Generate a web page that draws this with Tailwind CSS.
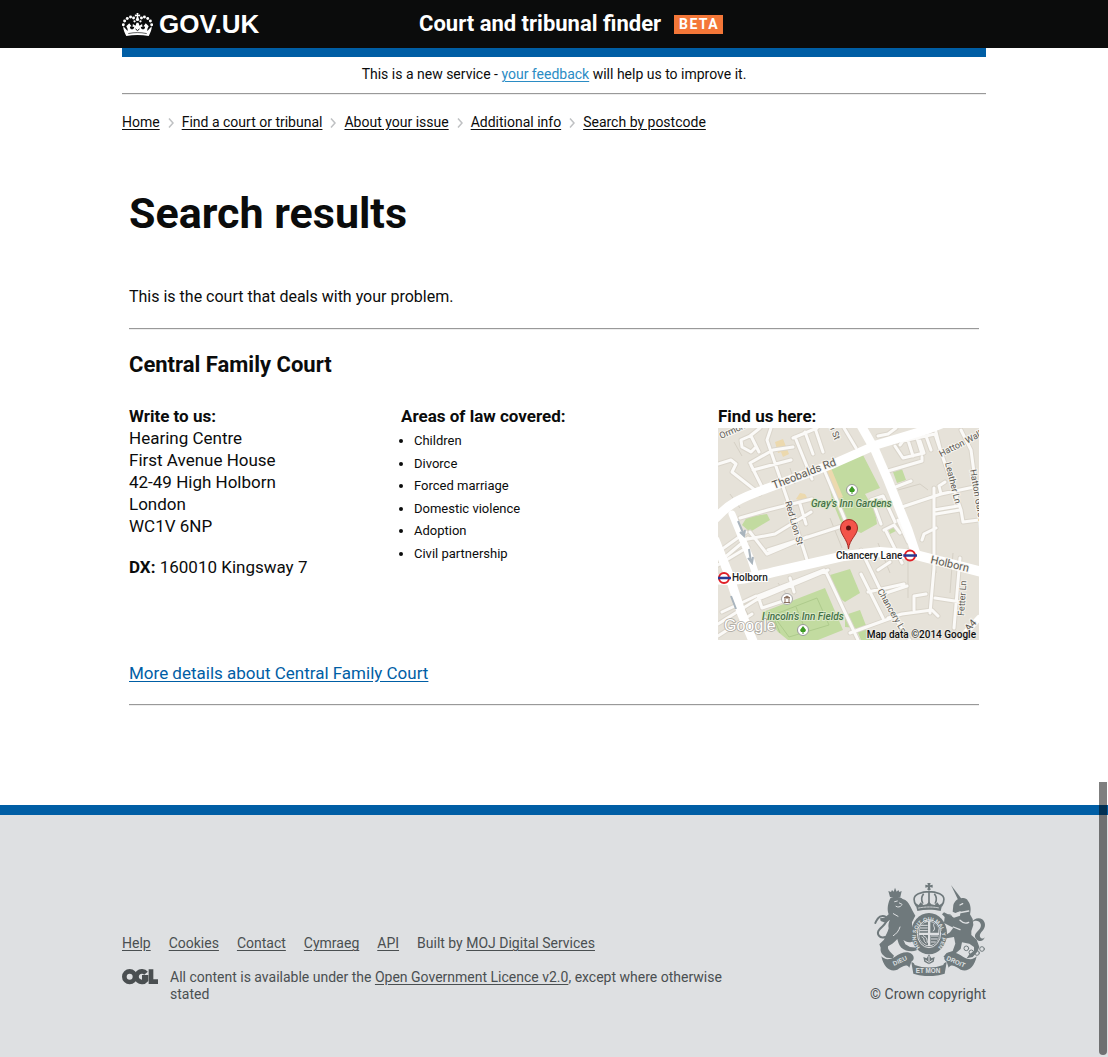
<!DOCTYPE html>
<html lang="en">
<head>
<meta charset="utf-8">
<meta name="viewport" content="width=device-width, initial-scale=1">
<title>Search results - Court and tribunal finder - GOV.UK</title>
<script src="https://cdn.jsdelivr.net/npm/@tailwindcss/browser@4"></script>
</head>
<body class="relative flex min-h-screen flex-col bg-white font-['Roboto','Liberation_Sans',sans-serif] text-[#0b0c0c]">

<header class="bg-[#0b0c0c] text-white">
  <div class="mx-auto grid h-12 max-w-[864px] grid-cols-[297px_1fr] items-center">
    <a href="#" class="flex items-center gap-1.5 font-['Liberation_Sans',sans-serif] text-[26px] leading-8 font-bold">
      <svg class="h-[23px] w-[31px]" viewBox="37 36 94 69" fill="currentColor" aria-hidden="true">
        <path d="M81 36h6l-1 5 6-1v6l-6-1 1 6h-6l1-6-6 1v-6l6 1z"/>
        <circle cx="84" cy="55" r="5"/>
        <circle cx="72" cy="51" r="4.500"/><circle cx="63" cy="48" r="4.500"/><circle cx="53" cy="52" r="4.500"/><circle cx="45" cy="60" r="4.500"/><circle cx="41" cy="71" r="4.500"/><circle cx="75" cy="61" r="3.500"/>
        <circle cx="96" cy="51" r="4.500"/><circle cx="105" cy="48" r="4.500"/><circle cx="115" cy="52" r="4.500"/><circle cx="123" cy="60" r="4.500"/><circle cx="127" cy="71" r="4.500"/><circle cx="93" cy="61" r="3.500"/>
        <path d="M41 76l13 14c1-5-1-9-4-14l9-9 7 9-5 1c0 4 2 8 6 8 5 0 7-4 7-8l-5 1 1-9 8 5 3-9h6l3 9 8-5 1 9-5-1c0 4 2 8 7 8 4 0 6-4 6-8l-5-1 7-9 9 9c-3 5-5 9-4 14l13-14c1 10-4 19-9 29-22-4-46-4-68 0-5-10-10-19-9-29z"/>
        <path d="M56 98c20-4 36-4 56 0" fill="none" stroke="#0b0c0c" stroke-width="2"/>
        <path d="M78 84l6 5 6-5" fill="none" stroke="#0b0c0c" stroke-width="3"/>
      </svg>
      <span>GOV.UK</span>
    </a>
    <div class="flex items-center gap-[13px]">
      <a href="#" class="text-[22px] leading-8 font-bold">Court and tribunal finder</a>
      <strong class="bg-[#f47738] pr-1 pl-[5px] text-sm leading-[19px] font-bold tracking-widest">BETA</strong>
    </div>
  </div>
</header>

<div class="mx-auto w-full max-w-[864px]">
  <div class="h-[9px] bg-[#005ea5]"></div>
  <p class="pt-[7px] pb-[9px] text-center text-sm">This is a new service - <a href="#" class="text-[#2b8cc4] underline underline-offset-2">your feedback</a> will help us to improve it.</p>
  <hr class="border-t border-b border-t-[#999] border-b-[#eee]">
  <nav aria-label="Breadcrumb" class="pt-[17px]">
    <ol class="flex flex-wrap text-sm">
      <li class="flex items-center"><a href="#" class="underline underline-offset-2">Home</a><svg class="mx-2 mt-0.5 h-2.5 w-1.5" viewBox="0 0 6 10" fill="none" stroke="#bfc1c3" stroke-width="1.5" aria-hidden="true"><path d="M1 .5 5 5 1 9.500"/></svg></li>
      <li class="flex items-center"><a href="#" class="underline underline-offset-2">Find a court or tribunal</a><svg class="mx-2 mt-0.5 h-2.5 w-1.5" viewBox="0 0 6 10" fill="none" stroke="#bfc1c3" stroke-width="1.5" aria-hidden="true"><path d="M1 .5 5 5 1 9.500"/></svg></li>
      <li class="flex items-center"><a href="#" class="underline underline-offset-2">About your issue</a><svg class="mx-2 mt-0.5 h-2.5 w-1.5" viewBox="0 0 6 10" fill="none" stroke="#bfc1c3" stroke-width="1.5" aria-hidden="true"><path d="M1 .5 5 5 1 9.500"/></svg></li>
      <li class="flex items-center"><a href="#" class="underline underline-offset-2">Additional info</a><svg class="mx-2 mt-0.5 h-2.5 w-1.5" viewBox="0 0 6 10" fill="none" stroke="#bfc1c3" stroke-width="1.5" aria-hidden="true"><path d="M1 .5 5 5 1 9.500"/></svg></li>
      <li><a href="#" class="underline underline-offset-2">Search by postcode</a></li>
    </ol>
  </nav>
</div>

<main class="mx-auto w-full max-w-[864px] px-[7px] pt-14 pb-[99px]">
  <h1 class="text-[43px] leading-[50px] font-bold">Search results</h1>
  <p class="mt-12 text-base leading-[22px]">This is the court that deals with your problem.</p>
  <hr class="mt-5 border-t border-b border-t-[#999] border-b-[#eee]">
  <h2 class="mt-5 text-[22px] leading-[30px] font-bold">Central Family Court</h2>

  <div class="mt-[25px] grid grid-cols-[272fr_317fr_261fr] text-[17px] leading-[22px]">
    <section>
      <h3 class="font-bold">Write to us:</h3>
      <address class="not-italic">Hearing Centre<br>First Avenue House<br>42-49 High Holborn<br>London<br>WC1V 6NP</address>
      <p class="mt-[19px]"><strong class="font-bold">DX:</strong> 160010 Kingsway 7</p>
    </section>
    <section>
      <h3 class="font-bold">Areas of law covered:</h3>
      <ul class="mt-[3px] grid h-[135px] list-disc auto-rows-fr pl-[13px] text-[13px]">
        <li>Children</li>
        <li>Divorce</li>
        <li>Forced marriage</li>
        <li>Domestic violence</li>
        <li>Adoption</li>
        <li>Civil partnership</li>
      </ul>
    </section>
    <section>
      <h3 class="font-bold">Find us here:</h3>
      <a href="#" class="mt-px block">
        <svg class="block w-full" viewBox="0 0 261 212" role="img" aria-label="Map of the area around Chancery Lane" font-family="Roboto, 'Liberation Sans', sans-serif">
          <defs>
            <path id="lanes" d="M0 36l13-4 5 4-4 8 28 22M42 0l-10 8-9 4 1 7 9 5 4-4M33 8l8 16M32 35l23-13 20-3M33 37l11 22M35 42l38-10M53 0l-4 12 24 70 18 56M75 10l24-10M77 9l17 42M87 4l8 22M97 0l8 24M107 44l26 62M22 90l28-8 44-11M25 112l32-6 36-22M82 76l6 20M28 104L0 124M30 110L6 130M0 137l30-18M50 122l74-24M32 104l17 22 40-17M40 168l66-26M40 168l4 12 24-8M0 196l38-24 72-30M72 150l4 14M108 144l32 68M0 208l34-22M4 184l34-16"/>
            <path id="lanes-east" d="M126 0l12 20M160 8l10-2 8-6M177 18l8 12 21-5-4-12M182 17l3-4 32-7 6 18M190 12l5 16M199 10l5 16M208 8l5 14M170 43l34-10v-4M175 60l18-7M181 80l42-14 38-8M217 0l6 24 20 58 2 12 16-2M243 2l10 20 4 30M223 66l-2-8 6-4M216 110V82l24-4M218 86l24-4M153 72l12-4 12 26M155 74l8 22M166 102l10-5 6 8M168 103l16 32M180 92l10 22M143 122l30 62 20 30M160 142l12-8M143 146l22 44M150 164l36-8M165 166l24-8M216 60v80l-4 45M170 190l14-4 30-4 6 6M196 182v-14l12-2M217 170l26 4M204 112l2-6 12-6M242 130l-6 70M132 205l44-16"/>
          </defs>
          <rect width="261" height="212" fill="#e6e2d9"/>
          <!-- parks -->
          <g fill="#c2dba0">
            <path d="M107 41l20-9 18-5 17 33-15 6 10 17 2 13-16 9-19-8-9-22z"/>
            <path d="M175 44l9-3 4 11-9 3zM24 97l5-8 20-3 3 6-20 12zM170 100l7-3 3 5-8 4z"/>
            <path d="M45 184l62-24 18 42-25 10H70l-10-8z"/>
            <path d="M112 147l20-6 10 24-15 9-9-6zM127 187l15-5 5 13 8 17h-12l-5-12-11-1z"/>
          </g>
          <path d="M55 187l44-17 12 27-40 12zM62 205l-7-17M88 203l-10-24" fill="none" stroke="#aecb8c"/>
          <g fill="#ecd9ae"><path d="M57 14l8-3 6 15-6 3-2-5-3 1zM107 43l6-3 12 29-7 3zM82 65l5 1 3 5-6 2-6-2z"/></g>
          <!-- building outlines -->
          <path d="M72 40l5 16M112 90l12 30M180 62l22-6 8 6M160 115l12 30M215 110l3 35M190 120v50M12 66l10 14M16 14l8 14M235 125l-3 40M60 155l9 12M20 168l12 22" fill="none" stroke="#d5d0c5"/>
          <!-- side streets -->
          <g fill="none" stroke-linecap="round" stroke-linejoin="round">
            <g stroke="#dad5cb" stroke-width="5"><use href="#lanes"/><use href="#lanes-east"/></g>
            <g stroke="#fbfaf8" stroke-width="3"><use href="#lanes"/><use href="#lanes-east"/></g>
          </g>
          <!-- main roads -->
          <g fill="none" stroke="#fff" stroke-linecap="round" stroke-linejoin="round">
            <path d="M-4 92C10 76 22 70 50 60L115 36l43-19L208 2l18-7" stroke-width="9"/>
            <path d="M141-6l16 28 13 30 20 50 8 24" stroke-width="9"/>
            <path d="M-4 151c20 3 40-2 60-7l70-16 36-4 36 3 66 17" stroke-width="10"/>
            <path d="M-3 112l14 35 12 37 14 34" stroke-width="9"/>
            <path d="M14 86l9 22 10 24 5 15" stroke-width="7"/>
            <path d="M261 190l-20 22" stroke-width="6"/>
          </g>
          <path d="M20 93l6 14m-4-3 4 4 1-6M31 121l2 13m-3-4 4 5 1-6M13 168l5 13" fill="none" stroke="#a9b4bd" stroke-width="2"/>
          <!-- street names -->
          <g fill="#5b5852" stroke="#f6f4ef" stroke-width="2" paint-order="stroke" font-size="9">
            <text transform="translate(3 11) rotate(-24)">Ormond</text>
            <text transform="translate(111 -2) rotate(68)">n St</text>
            <text transform="translate(56 61) rotate(-21)" font-size="11">Theobalds Rd</text>
            <text transform="translate(67 74) rotate(74)">Red Lion St</text>
            <text transform="translate(223 29) rotate(-27)">Hatton Wall</text>
            <text transform="translate(227 35) rotate(76)">Leather Ln</text>
            <text transform="translate(252 42) rotate(80)">Hatton Garden</text>
            <text transform="translate(212 135) rotate(13)" font-size="11">Holborn</text>
            <text transform="translate(159 163) rotate(60)">Chancery Ln</text>
            <text transform="translate(246 188) rotate(-86)">Fetter Ln</text>
            <text transform="translate(251 204) rotate(-48)" font-size="10">A4</text>
          </g>
          <g fill="#447247" stroke="#dbe8c8" stroke-width="2" paint-order="stroke" font-size="10" font-style="italic" font-weight="500">
            <text x="93" y="79">Gray's Inn Gardens</text>
            <text x="44" y="192">Lincoln's Inn Fields</text>
          </g>
          <!-- places -->
          <g>
            <circle cx="134" cy="62" r="5.500" fill="#fff" stroke="#999"/><path d="M134 58l3 4-1 2h-1.500v2h-1v-2H132l-1-2z" fill="#3d9a24"/>
            <circle cx="85" cy="202" r="5.500" fill="#fff" stroke="#999"/><path d="M85 198l3 4-1 2h-1.500v2h-1v-2H83l-1-2z" fill="#3d9a24"/>
            <circle cx="69" cy="171" r="5.500" fill="#fff" stroke="#aaa"/><path d="M66 170l3-2 3 2zM67 171v3m4-3v3M66 174.500h6" fill="#8a7060" stroke="#8a7060"/>
          </g>
          <g fill="#fff" stroke="#e01f26" stroke-width="2"><circle cx="6" cy="150" r="5"/><circle cx="192" cy="127.500" r="5"/></g>
          <path d="M0 150h13M185 127.500h14" stroke="#2a3a94" stroke-width="2.500"/>
          <g fill="#222" stroke="#fff" stroke-width="2" paint-order="stroke" font-size="10" font-weight="500">
            <text x="14" y="153">Holborn</text>
            <text x="118" y="131">Chancery Lane</text>
          </g>
          <path d="M130.500 121c-1-10-8-14-8-21a8.500 8.500 0 0 1 17 0c0 7-8 11-9 21z" fill="#f3544a" stroke="#a52a24"/>
          <circle cx="130.500" cy="100" r="2.500" fill="#5a120f"/>
          <text x="6" y="203" font-family="'Liberation Sans', sans-serif" font-size="16" fill="#fff" stroke="#aaa69d" stroke-width="1.500" paint-order="stroke">Google</text>
          <text x="258" y="210" text-anchor="end" font-family="Roboto, 'Liberation Sans', sans-serif" font-size="10" font-weight="500" fill="#111" stroke="#eceae4" stroke-width="2" paint-order="stroke">Map data ©2014 Google</text>
        </svg>
      </a>
    </section>
  </div>

  <p class="mt-[22px] text-[17px] leading-[22px]"><a href="#" class="text-[#005ea5] underline underline-offset-2">More details about Central Family Court</a></p>
  <hr class="mt-5 border-t border-b border-t-[#999] border-b-[#eee]">
</main>

<footer class="flex-1 border-t-[10px] border-[#005ea5] bg-[#dee0e2] text-sm text-[#4a4f51]">
  <div class="mx-auto flex max-w-[864px] items-end justify-between pt-[68px] pb-[53px] leading-[17px]">
    <div class="max-w-[640px]">
      <ul class="flex flex-wrap gap-x-[18px]">
        <li><a href="#" class="underline underline-offset-2">Help</a></li>
        <li><a href="#" class="underline underline-offset-2">Cookies</a></li>
        <li><a href="#" class="underline underline-offset-2">Contact</a></li>
        <li><a href="#" class="underline underline-offset-2">Cymraeg</a></li>
        <li><a href="#" class="underline underline-offset-2">API</a></li>
        <li>Built by <a href="#" class="underline underline-offset-2">MOJ Digital Services</a></li>
      </ul>
      <div class="mt-[17px] flex items-start gap-3">
        <svg class="w-9 shrink-0" viewBox="0 0 108 46" fill="none" stroke="#4a4f51" stroke-width="14" role="img" aria-label="Open Government Licence">
          <circle cx="23" cy="23" r="16"/>
          <path d="M72 13a16 16 0 1 0 0 20v-8H60"/>
          <path d="M87 1v37h21"/>
        </svg>
        <p>All content is available under the <a href="#" class="underline underline-offset-2">Open Government Licence v2.0</a>, except where otherwise stated</p>
      </div>
    </div>
    <a href="#" class="flex flex-col items-end gap-[10px]">
      <svg class="w-28" viewBox="42 38 336 280" fill="#6f797c" stroke-linecap="round" stroke-linejoin="round" aria-hidden="true" font-family="'Liberation Sans', sans-serif" font-weight="700">
        <!-- lion -->
        <path d="M90 80l-5-18 8 3 3-6 5 5 4-12 5 12 5-5 3 6 7-3-4 18z"/>
        <path d="M92 82c12-4 28-4 36 4 12 3 18 12 22 20l8 16 8 14-10 20 0 30 10 20-10 8c-10 4-20 0-26-6l6 14 14 8 20 2 0 8c-16 6-34 2-46-8-8-8-10-18-12-26-8 10-20 18-28 22-2 8 4 14 10 20l8 8-4 8-18-2c-14-8-20-18-18-30l-4-10 14-14c4-14 12-22 14-34-2-10 0-18 4-26l-12 10-16-6-2-8 14-2 12-10c-6-16-2-36 6-50z"/>
        <path d="M76 200c-18 6-28-10-18-22 10-12 26-20 22-34-4-10-20-8-26 0-4 6-6 8-8 14" fill="none" stroke="#6f797c" stroke-width="6"/>
        <path d="M104 94l8-2M118 98l8 4M108 108c6 4 12 2 16-2M100 130l14 8M120 170c-4 12-10 20-20 26" fill="none" stroke="#dee0e2" stroke-width="3"/>
        <!-- unicorn -->
        <path d="M273 44l32 42-9 6z"/>
        <path d="M280 104c4-12 14-20 24-20 8-2 16 0 20 8 8 10 10 26 6 40l8 14 2 18-6 18 0 12 16 14 8 22-6 14-14 16-18 4 8-12 14-10 0-12-14-10-22-4-4 20-14 12-20 12-18 0 10-12 18-6 8-22-4-20-22 4-8-6 18-12 10-14-28-14 2-18-8-8 6-6 16 8 14 8 18-6 2-14-16 6-8-4z"/>
        <path d="M348 205c-14-16 20-26 14-44-4-12-20-12-26-4 4-16 32-20 38 0 6 22-18 28-14 42 2 6 10 8 14 2-2 12-18 16-26 4z"/>
        <path d="M294 128l32-6M300 104l8-4M300 150c8 8 18 10 26 6M280 170l20 8" fill="none" stroke="#dee0e2" stroke-width="4"/>
        <g fill="none" stroke="#6f797c" stroke-width="3"><circle cx="319" cy="234" r="7"/><circle cx="334" cy="246" r="7"/><circle cx="351" cy="248" r="7"/><circle cx="366" cy="236" r="7"/><circle cx="268" cy="140" r="7"/></g>
        <!-- crown -->
        <path d="M202 38h10l-2 7 8-2v9l-8-2 2 9h-10l2-9-8 2v-9l8 2z"/>
        <path d="M207 64c-12 0-22 2-32 6-18 8-14 24-6 36M207 64c12 0 22 2 32 6 18 8 14 24 6 36M207 62v36M190 72c-6 8-6 18-2 26M224 72c6 8 6 18 2 26" fill="none" stroke="#6f797c" stroke-width="5"/>
        <path d="M166 98l10 6 6-8 8 8 10-2 7-8 7 8 10 2 8-8 6 8 10-6-6 24c-22-5-48-5-70 0z"/>
        <path d="M176 113c20-4 42-4 62 0" fill="none" stroke="#dee0e2" stroke-width="3" stroke-dasharray="5 4"/>
        <!-- garter and shield -->
        <ellipse cx="207" cy="190" rx="54" ry="62"/>
        <ellipse cx="207" cy="190" rx="35" ry="42" fill="none" stroke="#dee0e2" stroke-width="3"/>
        <path id="garter" d="M180 231a39 46 0 1 1 54 0" fill="none"/>
        <text font-size="16" fill="#dee0e2"><textPath href="#garter">HONI SOIT QUI MAL Y PENSE</textPath></text>
        <ellipse cx="207" cy="190" rx="31" ry="38" fill="#dee0e2"/>
        <path d="M180 174c2-10 12-18 24-19v32h-26zM211 155c12 2 22 10 24 20v12h-24zM178 194h26v31c-14-3-24-14-26-26zM211 194h26c-1 18-12 28-26 31z"/>
        <path d="M182 165h20M180 173h22M180 181h22M214 197h20M214 206h18M214 215h12M222 160c-6 8 8 12-2 22M186 200c10 4 2 12 12 18M190 196c8 8 10 0 12 20" fill="none" stroke="#dee0e2" stroke-width="3"/>
        <!-- motto ribbon -->
        <path d="M64 258c10 10 22 12 40 2 18-12 38-20 52-8 8 8 6 18-2 22l-6 18c-8-14-24-2-36 6-20 8-40-4-48-40z"/>
        <path d="M350 258c-10 10-22 12-40 2-18-12-38-20-52-8-8 8-6 18 2 22l6 18c8-14 24-2 36 6 20 8 40-4 48-40z"/>
        <path d="M154 276c8 0 10 8 10 8 28 10 58 10 86 0 0 0 2-8 10-8l-6 34c-30 10-64 10-94 0z"/>
        <path d="M207 252l7 12 10-4-3 14-14 8-14-8-3-14 10 4z"/>
        <path d="M207 258v20M197 270l6 4M217 270l-6 4" stroke="#dee0e2" stroke-width="3"/>
        <g fill="#dee0e2" font-size="19">
          <text transform="translate(102 287) rotate(-25)">DIEU</text>
          <text x="167" y="308">ET MON</text>
          <text transform="translate(258 268) rotate(24)">DROIT</text>
        </g>
      </svg>
      <span>© Crown copyright</span>
    </a>
  </div>
</footer>

<!-- overlay scroll thumb -->
<div class="absolute right-px bottom-0.5 h-[273px] w-2 rounded-b-full bg-black/50" aria-hidden="true"></div>
</body>
</html>
